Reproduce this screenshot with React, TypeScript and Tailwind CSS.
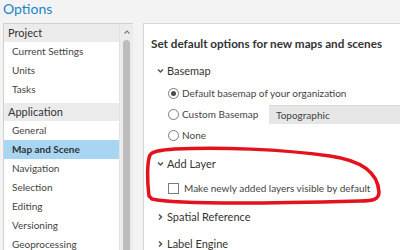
import React from 'react';

const font = { fontFamily: 'Lato, "Open Sans", sans-serif' };

const projectItems = ['Current Settings', 'Units', 'Tasks'];
const appItems = ['General', 'Map and Scene', 'Navigation', 'Selection', 'Editing', 'Versioning', 'Geoprocessing'];

function ChevronDown() {
  return (
    <svg width="7" height="6" viewBox="0 0 7 6" className="shrink-0">
      <polyline points="1,1.5 3.5,4 6,1.5" fill="none" stroke="#555" strokeWidth="1.5" />
    </svg>
  );
}

function ChevronRight() {
  return (
    <svg width="7" height="8" viewBox="0 0 7 8" className="shrink-0">
      <polyline points="2,1.5 4.5,4 2,6.5" fill="none" stroke="#555" strokeWidth="1.5" />
    </svg>
  );
}

function Radio({ checked }: { checked?: boolean }) {
  return (
    <span className="w-[11px] h-[11px] rounded-full border border-[#7a7a7a] bg-white flex items-center justify-center shrink-0">
      {checked && <span className="w-[5px] h-[5px] rounded-full bg-[#4a4a4a]" />}
    </span>
  );
}

export default function App() {
  return (
    <div className="w-[400px] h-[250px] overflow-hidden bg-[#f3f3f3] relative text-[#333] whitespace-nowrap" style={font}>
      <div className="h-[23px] pl-[3px] pt-[1px] text-[14px] leading-[16px] text-[#1a86c8]">Options</div>

      <div className="flex h-[227px]">
        {/* left nav */}
        <div className="ml-[3px] w-[130px] border-t border-l border-[#d0d0d0] flex">
          <div className="w-[116px] bg-white">
            <div className="h-[18px] bg-[#ebebeb] pl-[4px] text-[11px] leading-[18px] text-[#333]">Project</div>
            <div className="pb-[4px]">
              {projectItems.map((it) => (
                <div key={it} className="h-[19px] pl-[8px] text-[10px] leading-[19px] text-[#444]">{it}</div>
              ))}
            </div>
            <div className="h-[18px] bg-[#ebebeb] pl-[4px] text-[11px] leading-[18px] text-[#333]">Application</div>
            {appItems.map((it) => (
              <div
                key={it}
                className={
                  it === 'Map and Scene'
                    ? 'h-[19px] pl-[8px] text-[10px] leading-[19px] bg-[#a8d5f2] font-bold text-[#333]'
                    : 'h-[19px] pl-[8px] text-[10px] leading-[19px] text-[#444]'
                }
              >
                {it}
              </div>
            ))}
          </div>
          <div className="w-[14px] bg-[#ececec] border-l border-[#e2e2e2] flex flex-col items-center">
            <svg width="8" height="6" viewBox="0 0 8 6" className="mt-[5px]">
              <polyline points="1.5,4.5 4,2 6.5,4.5" fill="none" stroke="#777" strokeWidth="1.1" />
            </svg>
            <div className="mt-[5px] w-[7px] flex-1 rounded-t-[4px] bg-[#bdbdbd]" />
          </div>
        </div>

        {/* right settings */}
        <div className="ml-[10px] flex-1 bg-white border-t border-l border-[#d6d6d6]">
          <div className="pt-[10px] pl-[7px] h-[36px] text-[11.7px] leading-[18px] font-bold text-[#333]">
            Set default options for new maps and scenes
          </div>

          <div className="h-[22px] pl-[13px] flex items-center gap-[3px] text-[11px] text-[#333]">
            <ChevronDown />
            <span>Basemap</span>
          </div>

          <div className="pl-[24px] text-[10px] text-[#444]">
            <div className="h-[21px] flex items-center gap-[3px] mt-[1px]">
              <Radio checked />
              <span>Default basemap of your organization</span>
            </div>
            <div className="h-[21px] flex items-center">
              <Radio />
              <span className="ml-[3px] w-[87px]">Custom Basemap</span>
              <div className="flex-1 h-[19px] bg-[#e6e6e6] border-t border-[#d8d8d8] pl-[7px] leading-[18px] text-[#444]">
                Topographic
              </div>
            </div>
            <div className="h-[20px] flex items-center gap-[3px]">
              <Radio />
              <span>None</span>
            </div>
          </div>

          <div className="h-[38px] pl-[13px] flex items-center gap-[3px] text-[11px] text-[#333]">
            <ChevronDown />
            <span>Add Layer</span>
          </div>

          <div className="h-[10px] pl-[24px] flex items-center gap-[5px] text-[10px] text-[#444]">
            <span className="w-[11px] h-[11px] border border-[#7a7a7a] bg-white shrink-0" />
            <span>Make newly added layers visible by default</span>
          </div>

          <div className="h-[40px] pl-[13px] pt-[8px] flex items-center gap-[3px] text-[11px] text-[#333]">
            <ChevronRight />
            <span>Spatial Reference</span>
          </div>

          <div className="h-[22px] pl-[13px] flex items-center gap-[3px] text-[11px] text-[#333]">
            <ChevronRight />
            <span>Label Engine</span>
          </div>
        </div>
      </div>

      {/* red annotation */}
      <svg className="absolute inset-0 pointer-events-none" width="400" height="250" viewBox="0 0 400 250">
        <path
          d="M 149 196 C 147 180, 147 162, 150 155 C 152 151, 160 150, 175 149 C 220 147, 280 149, 330 156 C 365 161, 378 175, 379 192 C 379 199, 374 201, 360 201 C 320 202, 280 203, 240 203 C 200 203, 165 202, 152 199 Z"
          fill="none"
          stroke="#e3121c"
          strokeWidth="3.5"
          strokeLinejoin="round"
        />
      </svg>
    </div>
  );
}
